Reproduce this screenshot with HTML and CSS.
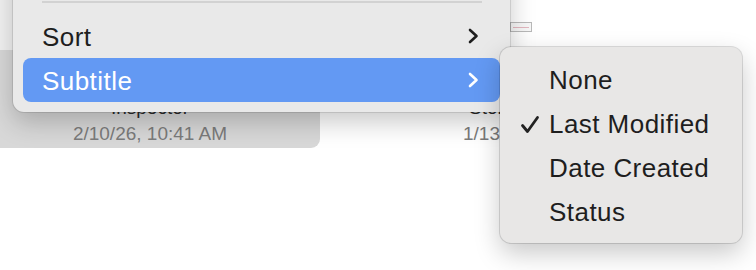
FILE: index.html
```html
<!DOCTYPE html>
<html lang="en">
<head>
<meta charset="utf-8">
<title>Subtitle menu</title>
<link rel="stylesheet" href="styles.css">
</head>
<body>
  <div class="shelf">
    <div class="card card-selected">
      <div class="thumb"></div>
      <div class="label">
        <div class="title">Inspector</div>
        <div class="date">2/10/26, 10:41 AM</div>
      </div>
    </div>
    <div class="card card-partial">
      <div class="thumb thumb-doc">
        <div class="doc"><span class="doc-line"></span></div>
      </div>
      <div class="label">
        <div class="title">Story</div>
        <div class="date">1/13/26</div>
      </div>
    </div>
  </div>

  <div class="menu">
    <div class="separator"></div>
    <div class="item">
      <span class="item-text">Sort</span>
      <svg class="chevron" width="11" height="16" viewBox="0 0 11 16"><polyline points="2,2 8.5,8 2,14" fill="none" stroke="currentColor" stroke-width="2.6" stroke-linecap="round" stroke-linejoin="round"/></svg>
    </div>
    <div class="item item-active">
      <span class="item-text">Subtitle</span>
      <svg class="chevron" width="11" height="16" viewBox="0 0 11 16"><polyline points="2,2 8.5,8 2,14" fill="none" stroke="currentColor" stroke-width="2.6" stroke-linecap="round" stroke-linejoin="round"/></svg>
    </div>
  </div>

  <div class="submenu">
    <div class="sub-item"><span class="check"></span><span class="sub-text">None</span></div>
    <div class="sub-item">
      <span class="check"><svg width="20" height="19" viewBox="0 0 20 19"><polyline points="2.5,10.5 7.5,16.5 17.5,2.5" fill="none" stroke="currentColor" stroke-width="2.8" stroke-linecap="round" stroke-linejoin="round"/></svg></span>
      <span class="sub-text">Last Modified</span>
    </div>
    <div class="sub-item"><span class="check"></span><span class="sub-text">Date Created</span></div>
    <div class="sub-item"><span class="check"></span><span class="sub-text">Status</span></div>
  </div>
</body>
</html>
```
FILE: styles.css
```css
html, body {
  margin: 0;
  padding: 0;
}
body {
  width: 756px;
  height: 270px;
  overflow: hidden;
  position: relative;
  background: #ffffff;
  font-family: "Liberation Sans", Arial, sans-serif;
  color: #1f1f1f;
}

/* background grid of documents */
.shelf {
  display: flex;
  gap: 50px;
  margin-left: -20px;
}
.card {
  width: 340px;
  flex: none;
  display: flex;
  flex-direction: column;
}
.thumb {
  height: 50px;
}
.card-selected .thumb {
  background: #f2f2f2;
}
.thumb-doc {
  display: flex;
  align-items: flex-start;
  padding-left: 140px;
  padding-top: 22px;
  box-sizing: border-box;
}
.doc {
  width: 22px;
  height: 10px;
  border: 1px solid #b9b9b9;
  background: #f7f7f7;
  display: flex;
  align-items: center;
  padding: 0 2px;
  box-sizing: border-box;
}
.doc-line {
  display: block;
  height: 1px;
  flex: 1;
  background: #e3b7bf;
}
.label {
  height: 98px;
  padding-top: 45px;
  box-sizing: border-box;
  text-align: center;
}
.card-selected .label {
  background: #d8d8d8;
  border-radius: 0 0 9px 0;
}
.card-partial .label {
  text-align: left;
  padding-left: 93px;
  white-space: nowrap;
}
.card-partial .title {
  padding-left: 6px;
}
.title {
  font-size: 19px;
  line-height: 26px;
  color: #2b2b2b;
}
.date {
  font-size: 19px;
  line-height: 26px;
  color: #7b7b7b;
}

/* main context menu */
.menu {
  position: absolute;
  left: 13px;
  top: -70px;
  width: 497px;
  height: 182px;
  box-sizing: border-box;
  padding: 0 10px 10px 10px;
  background: #e9e9e9;
  border-radius: 11px;
  box-shadow: 0 0 0 1px rgba(0, 0, 0, 0.10), 0 10px 26px rgba(0, 0, 0, 0.22);
  display: flex;
  flex-direction: column;
  justify-content: flex-end;
}
.separator {
  height: 2px;
  background: #d2d2d2;
  margin: 0 18px 11px 19px;
}
.item {
  height: 44px;
  display: flex;
  align-items: center;
  justify-content: space-between;
  padding: 0 21px 0 19px;
  border-radius: 8px;
  font-size: 26px;
  letter-spacing: 0.45px;
  color: #1e1e1e;
}
.item-active {
  background: #6399f3;
  color: #ffffff;
}
.item-text {
  line-height: 44px;
  padding-top: 1px;
}
.chevron {
  display: block;
}

/* submenu */
.submenu {
  position: absolute;
  left: 500px;
  top: 47px;
  width: 242px;
  height: 196px;
  box-sizing: border-box;
  padding: 11px 10px 7px 10px;
  background: #e8e7e6;
  border-radius: 11px;
  box-shadow: 0 0 0 1px rgba(0, 0, 0, 0.13), 0 10px 26px rgba(0, 0, 0, 0.22);
  display: flex;
  flex-direction: column;
}
.sub-item {
  height: 44px;
  display: flex;
  align-items: center;
  font-size: 26px;
  letter-spacing: 0.45px;
  color: #1e1e1e;
}
.sub-text {
  line-height: 44px;
}
.check {
  width: 39px;
  flex: none;
  display: flex;
  align-items: center;
  padding-left: 10px;
  box-sizing: border-box;
  color: #222222;
}
.check svg {
  display: block;
}
```
